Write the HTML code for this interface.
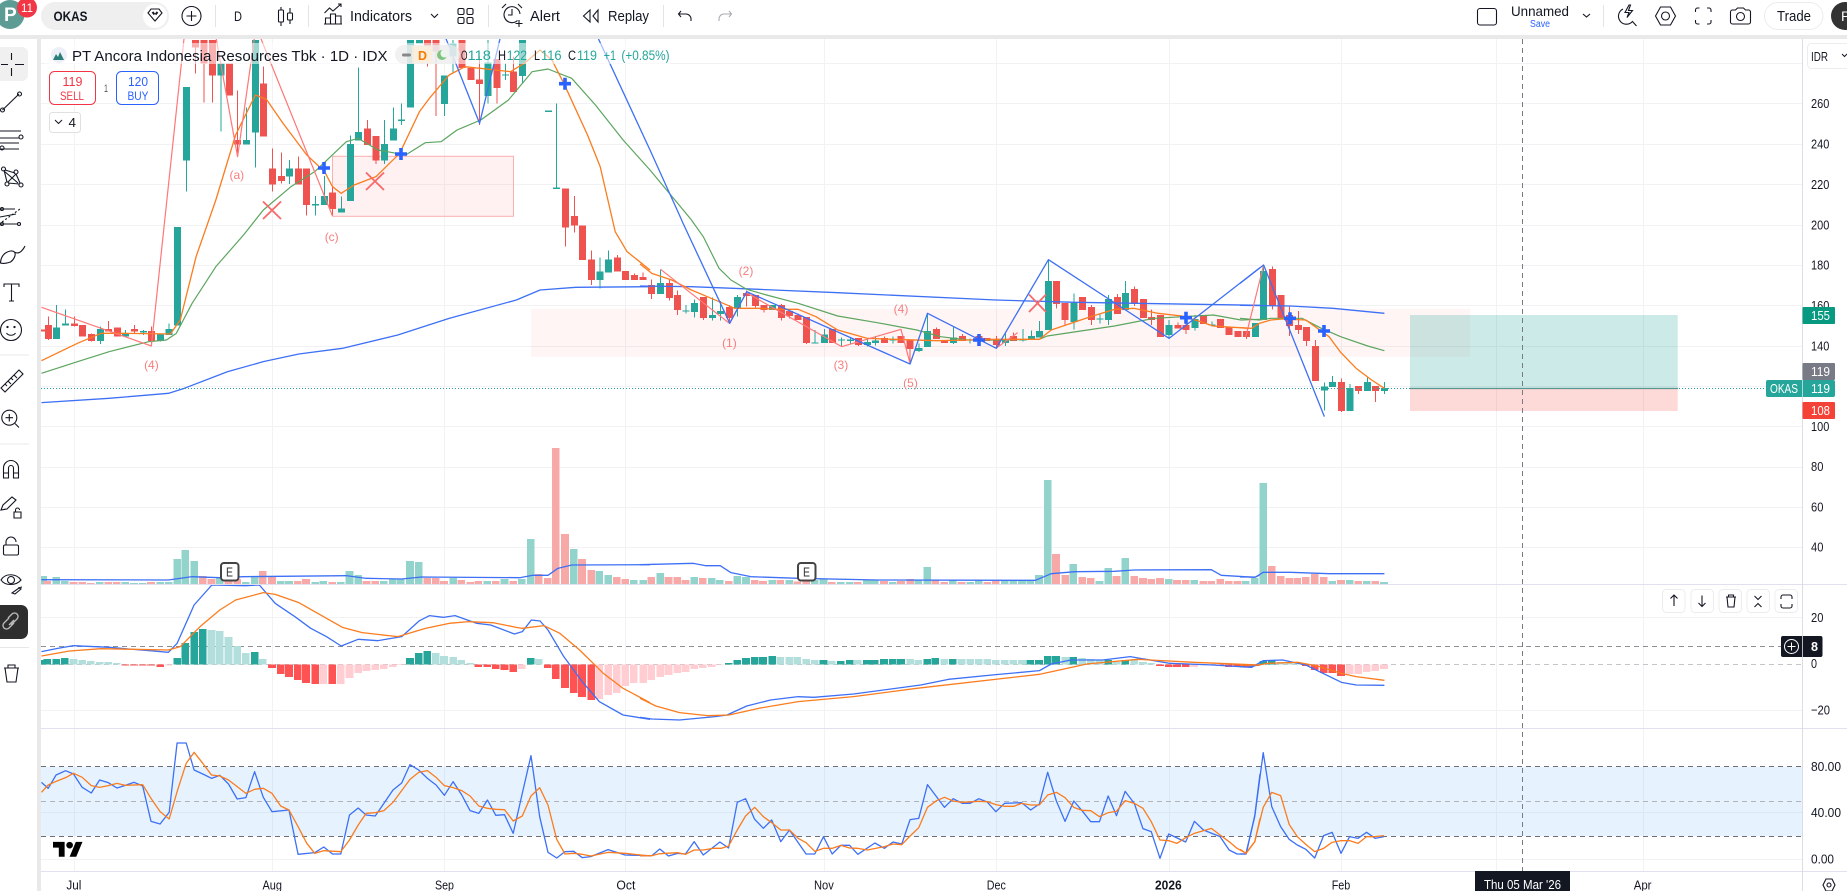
<!DOCTYPE html>
<html><head><meta charset="utf-8"><title>OKAS</title>
<style>
html,body{margin:0;padding:0;background:#fff;width:1847px;height:891px;overflow:hidden}
svg{display:block;font-family:"Liberation Sans",sans-serif}
path{vector-effect:non-scaling-stroke;fill:none}
.f{fill:#131722}
.i path,.i circle,.i rect{stroke:#131722;stroke-width:1.1;fill:none}
.gb{stroke:#26a69a;stroke-width:7;shape-rendering:crispEdges}
.gw{stroke:#26a69a;stroke-width:1;shape-rendering:crispEdges}
.rb{stroke:#ef5350;stroke-width:7;shape-rendering:crispEdges}
.rw{stroke:#ef5350;stroke-width:1;shape-rendering:crispEdges}
.vg{stroke:#92d3cc;stroke-width:7.6;shape-rendering:crispEdges}
.vr{stroke:#f7a9a7;stroke-width:7.6;shape-rendering:crispEdges}
.mG{stroke:#26a69a;stroke-width:7.6;shape-rendering:crispEdges}
.mL{stroke:#b2dfdb;stroke-width:7.6;shape-rendering:crispEdges}
.mR{stroke:#ff5252;stroke-width:7.6;shape-rendering:crispEdges}
.mP{stroke:#ffcdd2;stroke-width:7.6;shape-rendering:crispEdges}
.lo{stroke:#fb7c1e;stroke-width:1.3;stroke-linejoin:round}
.lg{stroke:#5ca55f;stroke-width:1.2;stroke-linejoin:round}
.lb{stroke:#3d70f5;stroke-width:1.3;stroke-linejoin:round}
.lr{stroke:#f77;stroke-width:1.2;stroke-linejoin:round}
.ax{font-size:13px;fill:#131722}
.wv{font-size:12px;fill:#f57f7f;text-anchor:middle}
</style></head>
<body>
<svg width="1847" height="891" viewBox="0 0 1847 891" xmlns="http://www.w3.org/2000/svg">
<defs>
<clipPath id="c"><rect x="41" y="39" width="1761" height="833"/></clipPath>
<clipPath id="cm"><rect x="41" y="585" width="1761" height="143"/></clipPath>
</defs>
<rect width="1847" height="891" fill="#fff"/>

<!-- grid -->
<g clip-path="url(#c)">
<path stroke="#f2f2f5" d="M41 63.5H1802M41 103.5H1802M41 144.5H1802M41 184.5H1802M41 225.5H1802M41 265.5H1802M41 305.5H1802M41 346.5H1802M41 386.5H1802M41 426.5H1802M41 467.5H1802M41 507.5H1802M41 547.5H1802M41 617.5H1802M41 710.5H1802M41 812.5H1802M41 859.5H1802"/>
<path stroke="#f2f2f5" d="M74.5 39V872M272.5 39V872M444.5 39V872M625.5 39V872M824.5 39V872M996.5 39V872M1169.5 39V872M1341.5 39V872M1496.5 39V872M1643.5 39V872"/>

<!-- RSI band -->
<rect x="41" y="766.7" width="1761" height="69.6" fill="#2196f3" opacity=".115"/>

<!-- band and rects -->
<rect x="531" y="308.7" width="939" height="48" fill="#ff5252" opacity=".06"/>
<rect x="332.5" y="156.3" width="181" height="60" fill="#ff5252" fill-opacity=".08" stroke="#f9b0b0"/>
<rect x="1410" y="315" width="267.7" height="73.3" fill="#009688" opacity=".2"/>
<rect x="1410" y="388.3" width="267.7" height="22.7" fill="#f44336" opacity=".2"/>
<path stroke="#6f8f8c" stroke-width="1.2" d="M1410 388.5H1678"/>

<!-- volume -->
<g transform="translate(30 430) scale(.39541 .33333)">
<path class="vg" d="M33 438V462M66 441V462M88 453V462M176 456V462M241 456V462M263 459V462M285 459V462M329 456V462M351 456V462M372 387V462M393 360V462M415 393V462M480 441V462M546 456V462M568 441V462M634 453V462M655 453V462M721 456V462M742 453V462M786 456V462M808 423V462M830 435V462M895 453V462M917 447V462M938 447V462M961 393V462M983 396V462M1070 444V462M1156 453V462M1200 447V462M1244 447V462M1266 327V462M1375 357V462M1440 423V462M1462 435V462M1527 450V462"/>
<path class="vr" d="M44 453V462M110 456V462M132 456V462M154 459V462M198 456V462M219 456V462M306 456V462M437 438V462M459 447V462M502 447V462M524 447V462M589 423V462M612 441V462M677 453V462M698 447V462M764 456V462M851 453V462M873 453V462M1005 444V462M1026 444V462M1047 453V462M1091 450V462M1113 456V462M1134 453V462M1178 453V462M1222 453V462M1287 432V462M1309 444V462M1330 54V462M1353 312V462M1396 387V462M1419 420V462M1484 441V462M1505 447V462"/>
<path class="lb" d="M29 449L350 450L410 440L480 443L540 440L800 437L850 445L940 447L990 441L1240 443L1270 436L1310 436L1335 415L1370 405L1568 404"/>
</g>
<g transform="translate(640 430) scale(.39541 .33333)">
<path class="vg" d="M8 450V462M51 429V462M137 441V462M181 444V462M202 450V462M246 438V462M268 441V462M334 450V462M377 450V462M442 450V462M464 447V462M508 456V462M530 456V462M574 450V462M594 450V462M639 456V462M704 450V462M726 411V462M791 450V462M835 456V462M857 450V462M922 453V462M944 453V462M966 453V462M987 450V462M1009 435V462M1031 150V462M1096 402V462M1162 453V462M1184 414V462M1227 384V462M1337 447V462M1402 450V462"/>
<path class="vr" d="M28 441V462M72 441V462M94 441V462M115 450V462M159 444V462M224 453V462M290 450V462M311 453V462M355 450V462M398 455V462M420 455V462M485 456V462M551 456V462M617 453V462M660 453V462M683 447V462M747 450V462M769 456V462M813 456V462M878 456V462M900 453V462M1052 372V462M1075 435V462M1118 441V462M1140 444V462M1205 438V462M1250 438V462M1272 444V462M1293 447V462M1315 444V462M1358 450V462M1380 450V462M1424 453V462M1445 453V462M1467 447V462M1489 453V462M1511 453V462"/>
<path class="lb" d="M0 404L135 400L165 407L203 407L230 428L280 440L400 445L600 450L1000 451L1040 431L1100 425L1200 424L1250 420L1445 419L1470 436L1555 442L1568 435"/>
</g>
<g transform="translate(1240 430) scale(.38712 .33333)">
<path class="vg" d="M15 453V462M38 444V462M60 159V462M238 453V462M283 450V462M327 453V462M372 456V462"/>
<path class="vr" d="M82 408V462M105 438V462M127 444V462M148 444V462M170 441V462M193 432V462M216 441V462M261 450V462M305 453V462M349 453V462"/>
<path class="lb" d="M0 441L40 441L60 427L130 427L230 431L373 431"/>
</g>

<!-- candles A -->
<g transform="translate(30 40) scale(.39541 .33333)">
<path class="gw" d="M67 795V897M90 808V850M178 860V912M242 870V890M287 870V885M330 882V905M352 850V867M396 362V455M483 107V275M548 203V300M570 278V383M656 360V432M722 468V527M745 408V495M788 470V505M810 287V483M831 82V276M897 240V372M919 203V265M940 190V255M1048 192V228M1070 0V100M1158 0V190M1202 70V120M1245 108V130M1331 190V445M1442 652V745M1463 632V660"/>
<path class="gb" d="M67 862V897M90 850V857M178 867V903M242 882V890M287 873V877M330 882V903M352 867V885M373 561V857M396 141V362M483 70V107M548 300V314M570 0V278M656 385V410M722 492V496M745 468V495M788 505V518M810 312V483M831 276V301M897 312V362M919 265V301M940 239V243M962 0V203M985 0V10M1048 106V192M1070 10V50M1158 68V168M1202 103V107M1245 0V108M1311 212V216M1331 443V447M1442 694V720M1463 658V697"/>
<path class="rw" d="M47 830V900M112 830V860M155 880V905M199 843V875M264 855V880M307 860V918M418 22V100M440 70V188M461 107V188M525 152V350M590 80V290M613 325V455M636 337V430M679 350V434M699 495V527M765 440V527M853 240V315M875 362V372M1005 20V80M1027 35V228M1137 50V255M1181 144V190M1223 50V94M1354 563V620M1377 468V578M1420 632V735M1486 645V652M1529 700V705"/>
<path class="rb" d="M47 855V897M29 868V874M112 850V858M133 855V890M155 882V903M199 867V875M221 862V890M264 867V875M307 873V903M418 0V22M440 0V70M461 0V107M505 70V167M525 300V314M590 130V290M613 385V434M636 408V423M679 385V434M699 385V495M765 457V507M853 265V315M875 288V362M1005 0V20M1027 0V35M1093 0V84M1115 84V120M1137 118V132M1181 57V144M1223 94V156M1354 445V563M1377 528V557M1397 556V660M1420 658V720M1486 652V695M1506 693V720M1529 705V720"/>
<path class="lb" d="M29 1088L200 1075L350 1060L390 1045L500 995L590 965L680 942L790 925L930 885L1060 835L1230 780L1290 750L1380 742L1568 740"/>
<path class="lg" d="M29 1000L120 965L200 935L300 905L345 900L370 880L410 790L470 680L540 585L590 510L660 440L720 395L800 305L830 295L880 330L950 345L1000 308L1040 305L1080 270L1140 240L1210 180L1270 95L1310 87L1370 115L1430 195L1500 300L1568 390L1673 540"/>
<path class="lo" d="M29 962L120 910L180 880L240 880L355 882L380 840L420 650L470 480L520 285L570 165L598 178L640 250L700 345L745 395L765 440L787 460L820 435L875 410L935 340L985 215L1010 175L1060 105L1100 80L1215 95L1250 70L1290 30L1320 60L1350 130L1410 285L1442 380L1480 575L1510 635L1568 690"/>
<path class="lr" d="M29 802L307 918L390 -10M470 -10L525 350L568 -10M582 -10L765 528"/>
<path class="lb" d="M1050 -10L1137 250L1190 -10M1435 -10L1568 330L1648 540"/>
</g>

<!-- candles B -->
<g transform="translate(640 220) scale(.39541 .33333)">
<path class="gw" d="M52 148V189M116 255V280M138 238V292M183 232V302M204 243V302M247 225V290M442 330V370M467 327V343M510 352V378M532 352V372M575 358V380M596 348V377M640 350V370M706 370V396M727 280V333M793 320V372M835 355V370M924 340V378M968 327V365M990 332V348M1010 303V333M1033 120V183M1098 220V328M1163 280V310M1185 225V315M1228 183V219M1338 300V352M1403 285V332M1447 305V320"/>
<path class="gb" d="M52 189V222M116 271V275M138 249V276M183 285V294M204 273V282M247 231V264M335 255V270M442 367V370M467 343V369M510 358V362M532 359V363M575 366V375M596 361V369M640 358V362M706 384V393M727 333V381M793 352V369M835 358V362M924 360V369M968 358V362M990 348V358M1010 333V352M1033 183V330M1098 249V306M1163 295V299M1185 237V300M1228 219V270M1338 315V345M1403 297V324M1447 313V317"/>
<path class="rw" d="M8 158V171M29 178V237M74 178V242M95 212V285M160 294V300M226 255V310M269 212V260M292 258V262M313 270V277M358 252V302M378 288V295M400 280V285M421 369V372M552 375V378M618 350V354M683 387V430M750 322V327M815 342V348M901 348V385M945 338V348M1053 252V265M1075 300V315M1142 255V315M1207 222V231M1250 200V258M1294 268V315M1360 308V315M1381 280V342"/>
<path class="rb" d="M8 171V180M29 195V222M74 189V234M95 225V270M160 231V294M226 261V294M269 219V228M292 225V258M313 255V270M358 255V294M378 273V288M400 285V300M421 291V369M487 327V369M552 354V375M618 354V369M660 348V369M683 360V387M750 327V357M770 360V369M815 348V363M857 348V360M878 354V363M901 360V375M945 348V363M1053 183V252M1075 249V300M1119 231V270M1142 261V300M1207 231V282M1250 207V252M1273 237V294M1294 291V300M1316 285V351M1360 315V325M1381 315V330M1425 285V312M1468 297V324M1490 321V345M1512 333V351"/>
<path class="lb" d="M0 198L130 200L300 208L500 218L900 240L1100 247L1568 256"/>
<path class="lg" d="M130 0L160 50L200 145L230 180L270 208L320 225L400 250L500 288L600 308L700 330L760 350L830 360L900 360L1010 358L1030 348L1200 318L1300 295L1450 285L1520 300L1568 298"/>
<path class="lo" d="M0 132L30 160L80 180L130 210L180 235L240 265L300 265L350 268L400 268L445 290L500 330L575 355L640 358L750 362L830 360L900 358L1010 358L1040 330L1140 290L1200 268L1250 265L1310 280L1370 288L1400 298L1450 318L1540 325"/>
<path class="lr" d="M52 148L226 310L269 218L510 380L660 328L683 430M900 385L955 338"/>
<path class="lb" d="M105 0L227 310L270 215L683 432L727 280L901 385L1033 119L1338 355L1568 143"/>
</g>

<!-- candles C -->
<g transform="translate(1240 220) scale(.38712 .33333)">
<path class="gw" d="M61 140V153M218 487V572M239 468V486M284 492V504M329 472V486M373 486V522"/>
<path class="gb" d="M40 309V351M61 153V300M218 500V512M239 486V501M284 504V573M329 486V513M373 504V513"/>
<path class="rw" d="M17 345V357M84 140V268M128 258V348M151 273V342M172 363V378M195 360V378M262 475V576M306 513V522M350 513V546"/>
<path class="rb" d="M17 333V351M84 147V258M106 225V294M128 285V318M151 315V330M172 321V363M195 378V483M262 486V573M306 498V513M350 498V513"/>
<path class="lb" d="M0 256L130 258L240 265L373 280"/>
<path class="lg" d="M0 295L50 300L80 295L160 295L210 325L260 350L330 378L373 392"/>
<path class="lo" d="M0 323L30 325L50 310L80 300L110 297L170 300L230 350L260 397L300 445L340 480L373 505"/>
<path class="lr" d="M15 350L61 135"/>
<path class="lb" d="M0 190L61 135L218 590"/>
</g>

<!-- price dotted -->
<path stroke="#26a69a" stroke-dasharray="1 2" d="M41 388.5H1766"/>

<!-- markers -->
<path stroke="#2962ff" stroke-width="3.6" d="M318 168H330M324 162V174M395 154H407M401 148V160M559 83.7H571M565 77.7V89.7M973 340H985M979 334V346M1180 317.7H1192M1186 311.7V323.7M1284 318.3H1296M1290 312.3V324.3M1318 331H1330M1324 325V337"/>
<path stroke="#f76a6a" stroke-width="1.8" d="M263 201.5L281 219M281 201.5L263 219M366 172.5L384 190M384 172.5L366 190M1029 294.5L1046 312M1046 294.5L1029 312"/>
<text class="wv" x="236.8" y="179">(a)</text>
<text class="wv" x="331.7" y="241">(c)</text>
<text class="wv" x="151.4" y="369">(4)</text>
<text class="wv" x="746" y="275">(2)</text>
<text class="wv" x="901" y="313">(4)</text>
<text class="wv" x="729.4" y="347">(1)</text>
<text class="wv" x="840.9" y="369">(3)</text>
<text class="wv" x="910.5" y="387">(5)</text>

<!-- E markers -->
<rect x="221" y="563" width="17.5" height="17.5" rx="3" fill="#fff" stroke="#444" stroke-width="2"/>
<text x="226" y="576.5" font-size="13" fill="#333" textLength="7" lengthAdjust="spacingAndGlyphs">E</text>
<rect x="798" y="563" width="17.5" height="17.5" rx="3" fill="#fff" stroke="#444" stroke-width="2"/>
<text x="803" y="576.5" font-size="13" fill="#333" textLength="7" lengthAdjust="spacingAndGlyphs">E</text>

<!-- MACD -->
<path stroke="#8f8f95" stroke-dasharray="5 4" d="M41 646.5H1781"/>
<path stroke="#c4c4c9" stroke-dasharray="5 4" d="M41 664.5H1802"/>
<g clip-path="url(#cm)">
<g transform="translate(30 430) scale(.39541 .33333)">
<path class="mG" d="M33 703V690M44 703V687M66 703V687M88 703V684M372 703V684M393 703V639M415 703V606M437 703V597M568 703V666M961 703V684M983 703V669M1005 703V663M1266 703V684"/>
<path class="mL" d="M110 703V687M132 703V690M154 703V693M176 703V696M198 703V696M219 703V699M459 703V600M480 703V603M502 703V621M524 703V648M546 703V669M589 703V687M1026 703V669M1047 703V678M1070 703V681M1091 703V690M1113 703V699M1287 703V687"/>
<path class="mR" d="M241 703V706M263 703V706M285 703V707M306 703V707M329 703V711M612 703V714M634 703V732M655 703V741M677 703V750M698 703V759M721 703V762M764 703V762M1134 703V711M1156 703V711M1178 703V717M1200 703V720M1222 703V726M1309 703V714M1330 703V747M1353 703V774M1375 703V789M1396 703V801M1419 703V810"/>
<path class="mP" d="M351 703V707M742 703V762M786 703V762M808 703V744M830 703V729M851 703V723M873 703V720M895 703V717M917 703V711M938 703V705M1244 703V717M1440 703V807M1462 703V795M1484 703V789M1505 703V768M1527 703V759"/>
<path class="lb" d="M29 665L70 655L110 647L200 652L300 662L350 667L372 640L415 525L460 465L545 467L580 465L620 520L670 560L710 595L750 620L787 648L830 628L880 632L940 620L985 572L1010 557L1045 562L1075 557L1130 580L1165 585L1225 612L1245 605L1268 570L1290 573L1310 600L1350 680L1400 760L1440 815L1500 855L1568 868"/>
<path class="lo" d="M29 678L100 663L180 656L350 660L380 650L430 590L480 540L520 510L590 488L620 493L680 518L790 592L840 608L930 620L1000 595L1060 580L1110 575L1170 578L1230 592L1245 595L1300 587L1340 610L1390 660L1450 730L1500 775L1568 818"/>
</g>
<g transform="translate(640 430) scale(.39541 .33333)">
<path class="mG" d="M224 703V699M246 703V690M268 703V684M290 703V681M311 703V681M334 703V678M464 703V690M508 703V693M530 703V690M574 703V690M594 703V690M617 703V687M639 703V687M660 703V687M726 703V687M747 703V684M791 703V687M987 703V690M1009 703V690M1031 703V678M1052 703V678M1096 703V681M1184 703V690M1227 703V690"/>
<path class="mL" d="M355 703V681M377 703V681M398 703V681M420 703V687M442 703V690M485 703V693M551 703V690M683 703V687M704 703V690M769 703V687M813 703V687M835 703V687M857 703V687M878 703V687M900 703V690M922 703V690M944 703V690M966 703V690M1075 703V681M1118 703V684M1140 703V687M1162 703V690M1205 703V696M1250 703V690M1272 703V696M1293 703V699"/>
<path class="mR" d="M1315 703V708M1337 703V711M1358 703V711M1380 703V711M1467 703V708M1489 703V711M1511 703V711"/>
<path class="mP" d="M8 703V759M28 703V750M51 703V741M72 703V735M94 703V729M115 703V726M137 703V717M159 703V714M181 703V711M202 703V705M1402 703V711"/>
<path class="lb" d="M0 862L30 867L100 870L190 860L220 855L270 828L330 810L400 800L440 802L540 792L710 765L780 748L900 734L1010 722L1040 702L1090 690L1170 690L1240 680L1340 700L1450 705L1530 711L1568 705"/>
<path class="lo" d="M0 805L40 828L100 848L170 857L225 855L300 835L400 815L540 800L700 775L1010 733L1130 702L1260 688L1400 697L1568 705"/>
</g>
<g transform="translate(1240 430) scale(.38712 .33333)">
<path class="mG" d="M60 703V693M82 703V690"/>
<path class="mL" d="M105 703V696M127 703V696M148 703V699"/>
<path class="mR" d="M15 703V711M38 703V708M170 703V708M193 703V720M216 703V729M238 703V729M261 703V738"/>
<path class="mP" d="M283 703V732M305 703V732M327 703V726M349 703V723M372 703V717"/>
<path class="lb" d="M0 710L30 712L60 692L110 690L170 705L262 757L300 765L373 766"/>
<path class="lo" d="M0 705L50 705L70 700L150 697L200 708L262 730L300 740L373 751"/>
</g>
</g>

<!-- RSI -->
<path stroke="#6e6e74" stroke-dasharray="5 4" d="M41 766.5H1802M41 836.5H1802"/>
<path stroke="#b0b3b8" stroke-dasharray="5 4" d="M41 801.5H1802"/>
<g transform="translate(30 720) scale(.39541 .33333)">
<path class="lb" d="M29 187L46 205L66 165L90 152L110 162L132 202L155 219L176 180L198 188L220 204L241 196L263 187L285 198L306 304L329 312L352 277L372 69L395 69L415 150L437 162L459 175L480 166L502 192L524 237L546 233L568 155L590 232L612 275L655 270L678 403L720 398L743 381L765 402L786 402L808 285L830 264L850 285L873 288L895 250L918 210L940 189L961 134L983 150L1005 175L1027 195L1048 226L1070 185L1092 225L1113 272L1135 280L1157 240L1178 286L1200 284L1222 340L1245 220L1267 107L1289 290L1310 397L1332 414L1353 395L1375 394L1397 413L1418 410L1462 389L1505 405L1568 407"/>
<path class="lo" d="M29 217L46 195L66 184L90 173L110 160L132 172L155 197L176 202L198 197L220 190L241 196L285 194L306 235L329 275L352 297L372 215L395 130L415 97L437 130L459 165L480 168L502 180L524 200L546 220L568 208L590 205L612 220L634 258L655 270L678 320L700 370L720 400L743 392L786 395L808 360L830 315L850 280L873 278L895 272L918 247L940 212L961 178L983 157L1005 152L1027 172L1048 197L1070 203L1092 212L1113 228L1135 258L1157 265L1178 268L1200 269L1222 303L1245 288L1267 228L1289 203L1310 255L1332 358L1353 402L1375 400L1397 403L1418 408L1462 397L1505 400L1568 408"/>
</g>
<g transform="translate(640 720) scale(.39541 .33333)">
<path class="lb" d="M0 407L30 407L50 387L72 408L95 400L115 402L137 365L160 405L202 366L224 384L246 247L267 236L290 298L312 325L333 300L356 365L378 330L420 402L442 402L464 350L486 402L508 376L530 376L551 403L594 369L618 385L640 366L662 372L683 299L705 295L727 194L770 262L792 236L815 250L835 250L857 236L878 246L900 275L922 250L965 248L988 270L1010 252L1031 157L1053 243L1075 304L1097 243L1118 272L1140 305L1162 305L1184 228L1205 287L1227 214L1250 250L1272 326L1293 335L1315 415L1337 342L1380 366L1402 304L1425 330L1467 350L1490 390L1510 402L1533 402L1555 285L1568 162"/>
<path class="lo" d="M0 407L30 407L50 401L95 398L115 403L137 390L160 390L185 385L205 385L224 378L246 330L267 288L290 262L312 290L333 308L356 330L378 330L400 355L420 368L442 394L464 385L486 385L508 376L530 384L551 385L575 390L618 380L640 372L662 374L683 348L705 323L727 262L750 242L770 232L792 243L815 247L857 244L878 245L900 254L922 259L945 259L965 250L988 255L1010 255L1031 225L1053 217L1075 233L1097 262L1118 271L1140 272L1162 290L1184 278L1205 274L1227 242L1250 250L1272 265L1293 305L1315 360L1337 362L1358 370L1380 353L1402 340L1445 325L1467 345L1490 365L1510 385L1533 400L1555 365L1568 295"/>
</g>
<g transform="translate(1240 720) scale(.38712 .33333)">
<path class="lb" d="M0 402L15 402L38 290L60 98L82 260L105 320L127 358L148 375L170 388L193 414L216 347L238 337L261 400L283 350L305 355L327 337L349 355L372 350"/>
<path class="lo" d="M0 388L15 400L38 365L60 262L82 217L105 227L127 313L148 350L170 373L193 395L216 385L238 367L261 362L283 362L305 370L327 350L349 350L372 347"/>
</g>

<!-- crosshair -->
<path stroke="#787b86" stroke-dasharray="5 4" d="M1522.5 39V872"/>
</g>

<!-- TV logo -->
<g transform="translate(53 838.5) scale(.83)">
<path style="fill:#000;vector-effect:none" d="M14 22H7V11H0V4h14v18zM28 22h-8l7.5-18h8L28 22z"/>
<circle cx="20" cy="8" r="4" fill="#000"/>
</g>

<!-- legend backdrop -->
<rect x="45" y="43" width="625" height="21" fill="#fff" opacity=".55"/>
<circle cx="59" cy="55" r="8" fill="#edf0f7"/>
<path style="fill:#2a7f78" d="M53 60l3-6 2 3 2-5 4 8z"/>
<text x="72" y="61" font-size="15" fill="#131722" textLength="315.5" lengthAdjust="spacingAndGlyphs">PT Ancora Indonesia Resources Tbk · 1D · IDX</text>
<rect x="395" y="45" width="65" height="19" rx="9.5" fill="#ececec" opacity=".75"/>
<rect x="412" y="46" width="20" height="17" fill="#fdeed9" opacity=".8"/>
<rect x="402" y="53.5" width="9" height="3" rx="1.5" fill="#888"/>
<text x="418" y="60" font-size="13" fill="#f57c00" font-weight="bold" textLength="9" lengthAdjust="spacingAndGlyphs">D</text>
<circle cx="442" cy="55" r="5" fill="#7cc47f"/><circle cx="444.5" cy="53.5" r="4" fill="#edf5ee"/>
<g font-size="13.5">
<text x="461" y="60" fill="#131722" textLength="6.5" lengthAdjust="spacingAndGlyphs">O</text>
<text x="467.5" y="60" fill="#26a69a" textLength="23.5" lengthAdjust="spacingAndGlyphs">118</text>
<text x="498" y="60" fill="#131722" textLength="8" lengthAdjust="spacingAndGlyphs">H</text>
<text x="506.7" y="60" fill="#26a69a" textLength="20.3" lengthAdjust="spacingAndGlyphs">122</text>
<text x="534" y="60" fill="#131722" textLength="6" lengthAdjust="spacingAndGlyphs">L</text>
<text x="541" y="60" fill="#26a69a" textLength="20.6" lengthAdjust="spacingAndGlyphs">116</text>
<text x="568" y="60" fill="#131722" textLength="8" lengthAdjust="spacingAndGlyphs">C</text>
<text x="577" y="60" fill="#26a69a" textLength="20" lengthAdjust="spacingAndGlyphs">119</text>
<text x="603.6" y="60" fill="#26a69a" textLength="12.4" lengthAdjust="spacingAndGlyphs">+1</text>
<text x="621.4" y="60" fill="#26a69a" textLength="48.2" lengthAdjust="spacingAndGlyphs">(+0.85%)</text>
</g>

<!-- sell/buy -->
<rect x="49.5" y="71.5" width="46" height="33" rx="5" fill="#fff" stroke="#f23645"/>
<text x="62.5" y="86" font-size="13" fill="#f23645" textLength="20" lengthAdjust="spacingAndGlyphs">119</text>
<text x="60" y="100" font-size="12" fill="#f23645" textLength="24" lengthAdjust="spacingAndGlyphs">SELL</text>
<text x="104" y="92" font-size="11" fill="#555" textLength="4" lengthAdjust="spacingAndGlyphs">1</text>
<rect x="116.5" y="71.5" width="42" height="33" rx="5" fill="#fff" stroke="#2962ff"/>
<text x="128" y="86" font-size="13" fill="#2962ff" textLength="20" lengthAdjust="spacingAndGlyphs">120</text>
<text x="127.5" y="100" font-size="12" fill="#2962ff" textLength="21" lengthAdjust="spacingAndGlyphs">BUY</text>
<rect x="49.5" y="112.5" width="31" height="20" rx="3" fill="#fff" stroke="#e0e0e0"/>
<path stroke="#131722" d="M55 120l3.5 3.5 3.5-3.5"/>
<text x="68.5" y="127" font-size="13" fill="#131722" textLength="7.5" lengthAdjust="spacingAndGlyphs">4</text>

<!-- gutters -->
<rect x="0" y="35" width="1847" height="4" fill="#e9e9ea"/>
<rect x="37" y="35" width="4" height="856" fill="#e9e9ea"/>
<rect x="0" y="39" width="37" height="852" fill="#fff"/>

<!-- panes sep -->
<path stroke="#e0e0ef" d="M41 584.5H1847M41 728.5H1847M41 871.5H1847"/>
<rect x="1803" y="39" width="44" height="852" fill="#fff"/>
<path stroke="#dcdde3" d="M1802.5 39V891"/>
<path stroke="#e0e0ef" d="M1803 584.5H1847M1803 728.5H1847M1803 871.5H1847"/>

<!-- top bar -->
<rect x="0" y="0" width="1847" height="35" fill="#fff"/>
<circle cx="10" cy="14.5" r="14.5" fill="#5d9c95"/>
<text x="4" y="21" font-size="19" fill="#fff" font-weight="bold">P</text>
<circle cx="27" cy="7.5" r="10" fill="#f23645"/>
<text x="21" y="12" font-size="12" fill="#fff" textLength="12" lengthAdjust="spacingAndGlyphs">11</text>
<rect x="41" y="2" width="128" height="28" rx="14" fill="#efefef"/>
<text x="53.5" y="21" font-size="14" font-weight="bold" fill="#131722" textLength="34" lengthAdjust="spacingAndGlyphs">OKAS</text>
<circle cx="155" cy="16" r="12" fill="#fff"/>
<g class="i">
<path d="M148 13l3-4h8l3 4-7 8z"/>
<path style="stroke-width:2" d="M152.5 12l2 2.5M157.5 12l-2 2.5"/>
<circle cx="191.5" cy="16" r="9.5"/><path d="M186.5 16h10M191.5 11v10"/>
<!-- candles -->
<path d="M281 7v3M281 22v4M290 8v5M290 20v4"/>
<rect x="278.5" y="10" width="5" height="12" rx="1"/><rect x="287.5" y="13" width="5" height="7" rx="1"/>
<!-- indicators -->
<path d="M325.5 24v-6h5v6M330.5 24v-10h5v10M335.5 24v-8h5.5v8M324 24h18"/>
<path d="M324.5 13l5-5 3.5 3 8-7M338 4h3v3"/>
<path d="M431 14l3.5 3.5 3.5-3.5"/>
<rect x="458" y="8.5" width="6" height="6" rx="1.5"/><rect x="467" y="8.5" width="6" height="6" rx="1.5"/><rect x="458" y="17.5" width="6" height="6" rx="1.5"/><rect x="467" y="17.5" width="6" height="6" rx="1.5"/>
<!-- alert -->
<path d="M517.5 20.5A8 8 0 1 1 520 14M502 8l4-4M518 4l4 4M512 9v6h-4"/>
<path d="M519 20v7M515.5 23.5h7"/>
<!-- replay -->
<path d="M590 10l-6.5 6 6.5 6zM598 10l-5 6 5 6z"/>
<!-- undo -->
<path d="M681 11l-2.5 3 2.5 3M679 14h7a5 5 0 0 1 5 5v2"/>
</g>
<g class="i"><path style="stroke:#a8abb3" d="M729 11l2.500 3-2.500 3M731 14h-7a5 5 0 0 0-5 5v2"/></g>
<path stroke="#e4e4e6" d="M215.5 5V27M308.5 5V27M488.5 5V27M663.5 5V27M1603.5 5V27"/>
<text x="234" y="21" font-size="14" fill="#131722" textLength="8" lengthAdjust="spacingAndGlyphs">D</text>
<text x="350" y="21" font-size="14.5" fill="#131722" textLength="62" lengthAdjust="spacingAndGlyphs">Indicators</text>
<text x="530" y="21" font-size="14.5" fill="#131722" textLength="30" lengthAdjust="spacingAndGlyphs">Alert</text>
<text x="608" y="21" font-size="14.5" fill="#131722" textLength="41" lengthAdjust="spacingAndGlyphs">Replay</text>

<g class="i">
<rect x="1477.5" y="8.5" width="19" height="16.5" rx="2.5"/>
<path d="M1583 14l3.5 3 3.500-3"/>
<path d="M1623 9a8 8 0 1 0 9 13M1632 21l4.500 5M1629 5l-4 7.500h4l-2 5 5.500-7h-4l2-5.500z"/>
<path d="M1655.5 16l5-9h10l5 9-5 9h-10z"/><circle cx="1665.5" cy="16" r="4"/>
<path d="M1695.5 12V10a2 2 0 0 1 2-2h2M1707 8h2a2 2 0 0 1 2 2v2M1711 20v2a2 2 0 0 1-2 2h-2M1699.5 24h-2a2 2 0 0 1-2-2v-2"/>
<path d="M1730.5 12a2 2 0 0 1 2-2h3l2-2h6l2 2h3a2 2 0 0 1 2 2v10a2 2 0 0 1-2 2h-16a2 2 0 0 1-2-2z"/><circle cx="1740.5" cy="16.5" r="4"/>
</g>
<text x="1511" y="16" font-size="14" fill="#131722" textLength="58" lengthAdjust="spacingAndGlyphs">Unnamed</text>
<text x="1530" y="27" font-size="10" fill="#2962ff" textLength="20" lengthAdjust="spacingAndGlyphs">Save</text>
<rect x="1764.5" y="2.5" width="58.5" height="27" rx="13.5" fill="#fff" stroke="#ececec"/>
<text x="1777" y="21" font-size="14.5" fill="#131722" textLength="34" lengthAdjust="spacingAndGlyphs">Trade</text>
<circle cx="1845" cy="16" r="14" fill="#333"/>
<text x="1841" y="21" font-size="14" fill="#fff">P</text>

<!-- left toolbar -->
<rect x="-6" y="47" width="34" height="34" rx="6" fill="#f0f0f0"/>
<g class="i">
<path d="M11.5 53v7M11.5 68v8M1 64.500h7M15 64.500h9"/>
<path d="M2.500 110L19 94"/><circle cx="2.500" cy="110" r="2"/><circle cx="19.500" cy="94" r="2"/>
<path d="M0 131h21M0 138h19M0 143h19M0 149h19"/><circle cx="21" cy="137" r="2"/><circle cx="2" cy="148" r="2"/>
<path d="M4 170l3 12M5 170l10 3M16 174l4 9M8 182l8-8M8 183l11 1M4 171l14 12"/><circle cx="3.500" cy="169" r="2"/><circle cx="7" cy="184" r="2"/><circle cx="16" cy="172" r="2"/><circle cx="21" cy="185" r="2"/>
<path d="M0 209h15M0 217l16-3M0 224h17"/><path stroke-dasharray="2 2" d="M2 222l18-13"/><circle cx="2" cy="209" r="1.500"/><circle cx="19" cy="224" r="1.500"/><circle cx="2" cy="224" r="1.500"/>
<path d="M0.500 263c0-4 2-8 5-10 3-2 7-3 9-1 2 3-1 8-4 10-3 1-7 2-10 1zM14 252l3 1c3 0 6-3 8-7"/>
<path d="M4 287v-3h15v3M11.500 284v17M9 301h5"/>
<circle cx="11" cy="330" r="10.500"/><path d="M6.500 333c2 3 7 3 9 0"/><circle cx="7.500" cy="327" r=".6"/><circle cx="14.500" cy="327" r=".6"/>
<path d="M1 388l18-18 4 4-18 18zM5 384l2 2M8 381l3 3M11 378l2 2M14 375l3 3"/>
<circle cx="9.300" cy="417.700" r="7.500"/><path d="M15 423.500l4 4M5.500 417.700h7.500M9.300 414v7.500"/>
<path d="M3.500 478v-10a7.500 7.500 0 0 1 15 0v10h-5v-10a2.500 2.500 0 0 0-5 0v10zM3.500 473h5M13.500 473h5"/>
<path d="M1 510l2-5 9-8 4 3-9 9zM1 510l5-1M14 518v-6h7v6z"/><path d="M15.500 512v-2a2 2 0 0 1 4 0"/>
<rect x="3.500" y="545" width="15" height="10" rx="1.500"/><path d="M6 545v-3a5 5 0 0 1 10 0"/>
<path d="M1 580c4-7 15-7 20 0-5 6-16 6-20 0z"/><circle cx="11" cy="580" r="3.500"/><path d="M12 593l7-5 2 1-6 5zM18 588l4-1"/>
<path d="M4 668h15M8 668v-3h7v3M5 668l2 14h9l2-14"/>
</g>
<path stroke="#e8e8ea" d="M0 355H29M0 444H29M0 647.5H29"/>
<rect x="-8" y="605" width="36" height="34" rx="7" fill="#2e2e2e"/>
<path stroke="#bbb" stroke-width="1.3" d="M9 618l-5 5a3.500 3.500 0 0 0 5 5l5-5M11 625l6-6a3.500 3.500 0 0 0-5-5l-4 4M9 625l5-5"/>

<!-- right axis -->
<rect x="1807.5" y="43.5" width="45" height="25" rx="4" fill="#fff" stroke="#ececec"/>
<text x="1811" y="61" font-size="13" fill="#131722" textLength="17" lengthAdjust="spacingAndGlyphs">IDR</text>
<path stroke="#131722" d="M1842 54l2.500 2.500 2.500-2.500"/>
<g class="ax">
<text x="1811" y="108" textLength="18.3" lengthAdjust="spacingAndGlyphs">260</text>
<text x="1811" y="148.5" textLength="18.3" lengthAdjust="spacingAndGlyphs">240</text>
<text x="1811" y="189" textLength="18.3" lengthAdjust="spacingAndGlyphs">220</text>
<text x="1811" y="229.5" textLength="18.3" lengthAdjust="spacingAndGlyphs">200</text>
<text x="1811" y="269.5" textLength="18.3" lengthAdjust="spacingAndGlyphs">180</text>
<text x="1811" y="310" textLength="18.3" lengthAdjust="spacingAndGlyphs">160</text>
<text x="1811" y="350.5" textLength="18.3" lengthAdjust="spacingAndGlyphs">140</text>
<text x="1811" y="431" textLength="18.3" lengthAdjust="spacingAndGlyphs">100</text>
<text x="1811" y="471" textLength="12.4" lengthAdjust="spacingAndGlyphs">80</text>
<text x="1811" y="511.5" textLength="12.4" lengthAdjust="spacingAndGlyphs">60</text>
<text x="1811" y="551.5" textLength="12.4" lengthAdjust="spacingAndGlyphs">40</text>
<text x="1811" y="622" textLength="12.4" lengthAdjust="spacingAndGlyphs">20</text>
<text x="1811" y="668" textLength="6" lengthAdjust="spacingAndGlyphs">0</text>
<text x="1811" y="714.5" textLength="19" lengthAdjust="spacingAndGlyphs">−20</text>
<text x="1811" y="771" textLength="30" lengthAdjust="spacingAndGlyphs">80.00</text>
<text x="1811" y="817" textLength="30" lengthAdjust="spacingAndGlyphs">40.00</text>
<text x="1811" y="863.5" textLength="23" lengthAdjust="spacingAndGlyphs">0.00</text>
</g>

<!-- price labels -->
<rect x="1802.5" y="307" width="32.5" height="17" rx="1" fill="#089981"/>
<text x="1811" y="320" font-size="13" fill="#fff" textLength="19" lengthAdjust="spacingAndGlyphs">155</text>
<rect x="1802.5" y="363" width="32.5" height="17" rx="1" fill="#787b86"/>
<text x="1811" y="376" font-size="13" fill="#fff" textLength="19" lengthAdjust="spacingAndGlyphs">119</text>
<rect x="1766" y="380" width="69" height="17" rx="2" fill="#26a69a"/>
<path stroke="#fff" stroke-width=".6" d="M1802.5 380V397"/>
<text x="1770" y="393" font-size="13" fill="#fff" textLength="28" lengthAdjust="spacingAndGlyphs">OKAS</text>
<text x="1811" y="393" font-size="13" fill="#fff" textLength="19" lengthAdjust="spacingAndGlyphs">119</text>
<rect x="1802.5" y="402" width="32.5" height="17" rx="1" fill="#f44336"/>
<text x="1811" y="415" font-size="13" fill="#fff" textLength="19" lengthAdjust="spacingAndGlyphs">108</text>

<!-- plus label -->
<rect x="1781" y="636" width="41.5" height="21" rx="2" fill="#131722"/>
<path stroke="#fff" stroke-width=".7" d="M1802.5 636V657"/>
<circle cx="1791.5" cy="646.5" r="7" fill="none" stroke="#fff"/>
<path stroke="#fff" d="M1787.5 646.5h8M1791.5 642.5v8"/>
<text x="1811" y="651" font-size="13" font-weight="bold" fill="#fff" textLength="7" lengthAdjust="spacingAndGlyphs">8</text>

<!-- pane buttons -->
<g fill="#fff" stroke="#ececec">
<rect x="1662.5" y="589.5" width="22.5" height="23" rx="4"/>
<rect x="1691" y="589.5" width="22.5" height="23" rx="4"/>
<rect x="1719" y="589.5" width="22.5" height="23" rx="4"/>
<rect x="1747" y="589.5" width="22.5" height="23" rx="4"/>
<rect x="1775" y="589.5" width="22.5" height="23" rx="4"/>
</g>
<g class="i">
<path d="M1674 606v-11M1670.5 598.5l3.500-3.500 3.500 3.500"/>
<path d="M1702 595.5v11M1698.5 603l3.500 3.500 3.500-3.500"/>
<path d="M1726 597h10M1728.5 597v-2h5v2M1727 597l1 10h6l1-10"/>
<path d="M1754.5 596l3.500 3.500 3.500-3.500M1754.5 607l3.500-3.500 3.500 3.500"/>
<path d="M1781 599v-2a2 2 0 0 1 2-2h7a2 2 0 0 1 2 2v2M1792 604v2a2 2 0 0 1-2 2h-7a2 2 0 0 1-2-2v-2"/>
</g>

<!-- time axis -->
<g class="ax">
<text x="66.4" y="889.5" textLength="15" lengthAdjust="spacingAndGlyphs">Jul</text>
<text x="262.5" y="889.5" textLength="19.5" lengthAdjust="spacingAndGlyphs">Aug</text>
<text x="435" y="889.5" textLength="19" lengthAdjust="spacingAndGlyphs">Sep</text>
<text x="616.4" y="889.5" textLength="19" lengthAdjust="spacingAndGlyphs">Oct</text>
<text x="814" y="889.5" textLength="19.8" lengthAdjust="spacingAndGlyphs">Nov</text>
<text x="986.8" y="889.5" textLength="19" lengthAdjust="spacingAndGlyphs">Dec</text>
<text x="1155" y="889.5" font-weight="bold" textLength="26.7" lengthAdjust="spacingAndGlyphs">2026</text>
<text x="1331.7" y="889.5" textLength="18.6" lengthAdjust="spacingAndGlyphs">Feb</text>
<text x="1633.7" y="889.5" textLength="17.8" lengthAdjust="spacingAndGlyphs">Apr</text>
</g>
<rect x="1475" y="871" width="95" height="20" fill="#131722"/>
<text x="1484" y="889" font-size="13" fill="#fff" textLength="77" lengthAdjust="spacingAndGlyphs">Thu 05 Mar '26</text>
<g class="i"><path d="M1823 885l3-6h6l3 6-3 6h-6z"/><circle cx="1829" cy="885" r="2"/></g>
</svg>
</body></html>
